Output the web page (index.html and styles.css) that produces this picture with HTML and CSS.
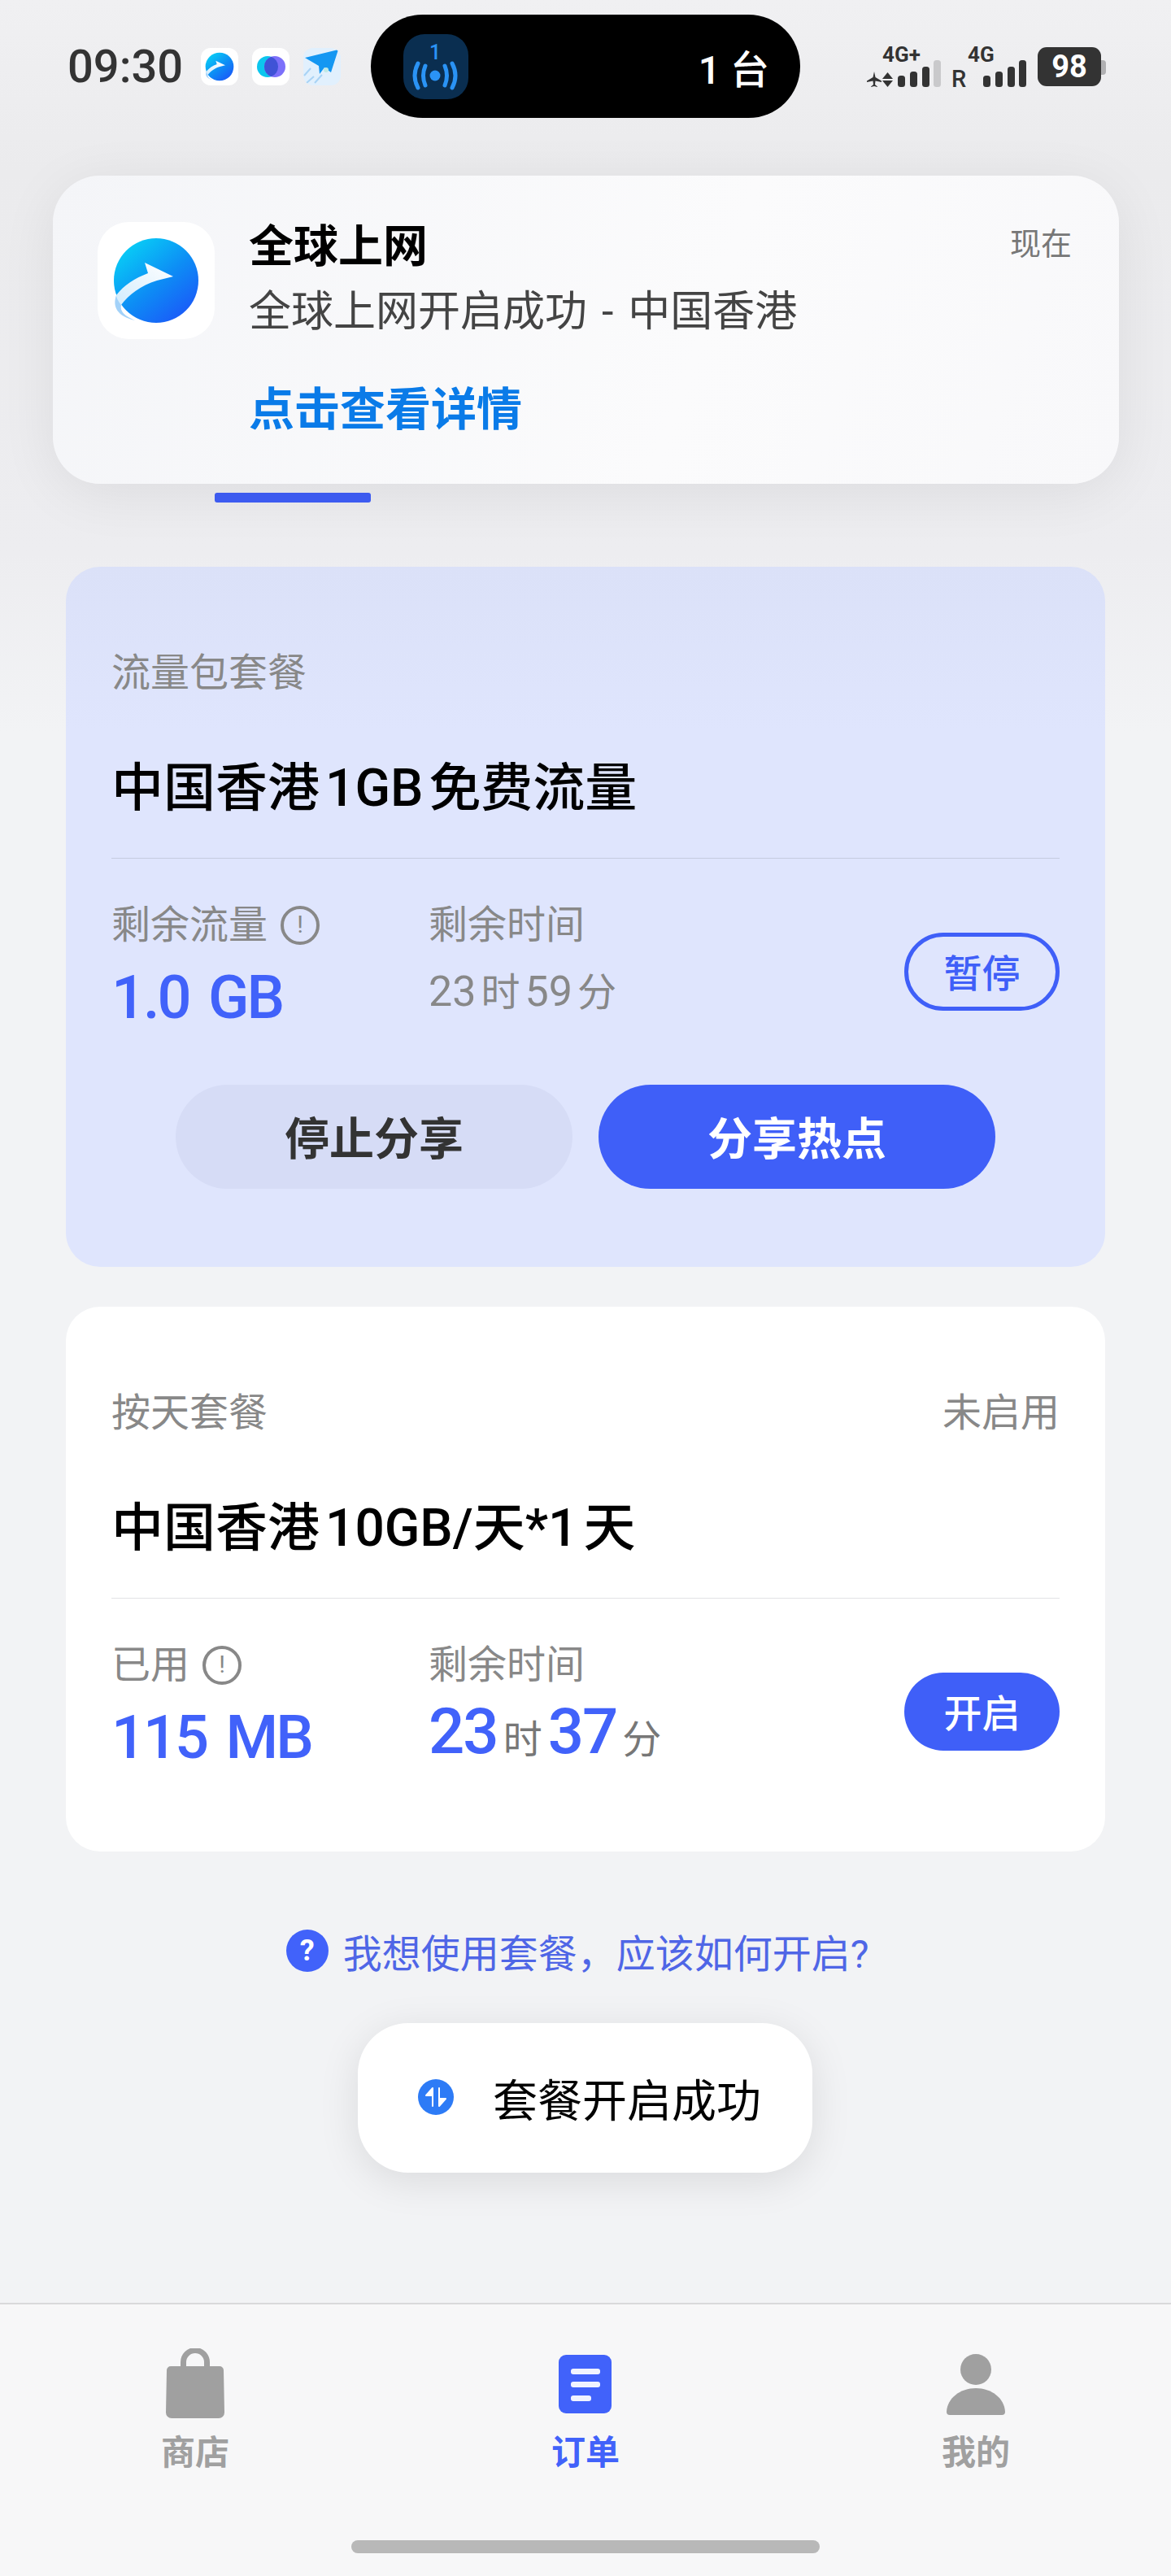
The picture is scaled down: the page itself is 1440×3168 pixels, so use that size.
FILE: index.html
```html
<!DOCTYPE html>
<html lang="zh-CN">
<head>
    <meta charset="UTF-8">
    <meta name="viewport" content="width=device-width, initial-scale=1.0">
    <link rel="stylesheet" href="styles.css">
    <title>全球上网</title>
</head>
<body>
    <svg class="defs" width="0" height="0" aria-hidden="true">
        <defs>
            <linearGradient id="ball" x1="0.15" y1="0.05" x2="0.85" y2="0.9">
                <stop offset="0" stop-color="#08d0f6"/>
                <stop offset="0.55" stop-color="#0d8df5"/>
                <stop offset="1" stop-color="#1a5cf8"/>
            </linearGradient>
            <linearGradient id="swoosh" x1="0" y1="1" x2="1" y2="0">
                <stop offset="0" stop-color="#d2ecfd"/>
                <stop offset="1" stop-color="#ffffff"/>
            </linearGradient>
            <symbol id="logo" viewBox="-2 -2 108 108">
                <circle cx="52" cy="52" r="52" fill="url(#ball)"/>
                <path d="M3 70 C-2 84 4 96 26 101 C14 96 7 90 9 82 Z" fill="#a3d2f9"/>
                <path d="M38 30 L73 47 L53 52 C33 58 18 70 9 82 C5 77 3 73 3 70 C12 58 26 49 42 43 Z" fill="url(#swoosh)"/>
            </symbol>
        </defs>
    </svg>

    <!-- status bar -->
    <div class="statusbar">
        <span class="clock">09:30</span>
        <div class="mini-apps">
            <div class="mini-app"><svg width="36" height="36"><use href="#logo"/></svg></div>
            <div class="mini-app">
                <svg width="46" height="46" viewBox="0 0 46 46">
                    <circle cx="19" cy="23" r="13" fill="#0cc6ee"/>
                    <circle cx="28" cy="23" r="13" fill="#7c70fa"/>
                    <path d="M23.5 10.8 A13 13 0 0 1 23.5 35.2 A13 13 0 0 1 23.5 10.8 Z" fill="#3f53d6"/>
                </svg>
            </div>
            <div class="mini-app mini-plane">
                <svg width="46" height="46" viewBox="0 0 46 46">
                    <path d="M1 34 L9 25 M4 43 L13 35 M14 43 L23 33" stroke="#a9d3f5" stroke-width="2" fill="none"/>
                    <path d="M43 2 L2 12 L19 22 L20 32 L26 24 L34 30 Z" fill="#1497f2"/>
                    <circle cx="28" cy="27" r="3" fill="#bfe9e6"/>
                </svg>
            </div>
        </div>
        <div class="signal">
            <svg width="298" height="74" viewBox="0 -10 298 74">
                <text class="net" x="21" y="20">4G+</text>
                <path d="M11 32 L12.5 39 L20 43.5 V45 L12.5 43.5 L12 48 L15 50.5 V51 L11 50 L7 51 V50.5 L10 48 L9.5 43.5 L2 45 V43.5 L9.5 39 Z" fill="#333"/>
                <path d="M27.5 33 L34 41 H21 Z M27.5 51 L34 43 H21 Z" fill="#333"/>
                <rect x="40" y="37" width="9" height="14" rx="3.5" fill="#333"/>
                <rect x="55" y="32" width="9" height="19" rx="3.5" fill="#333"/>
                <rect x="70" y="26" width="9" height="25" rx="3.5" fill="#333"/>
                <rect x="84" y="18" width="9" height="33" rx="3.5" fill="#c9c9cb"/>
                <text class="net roam" x="106" y="51">R</text>
                <text class="net" x="126" y="20">4G</text>
                <rect x="145" y="37" width="9" height="14" rx="3.5" fill="#333"/>
                <rect x="160" y="32" width="9" height="19" rx="3.5" fill="#333"/>
                <rect x="175" y="26" width="9" height="25" rx="3.5" fill="#333"/>
                <rect x="189" y="18" width="9" height="33" rx="3.5" fill="#333"/>
                <path d="M290 18 H292 A4 4 0 0 1 296 22 V32 A4 4 0 0 1 292 36 H290 Z" fill="#b0b0b2"/>
                <rect x="212" y="2" width="78" height="48" rx="11" fill="#333"/>
                <text class="battery" x="251" y="39">98</text>
            </svg>
        </div>
    </div>

    <!-- island -->
    <div class="island">
        <div class="island-icon">
            <svg width="80" height="80" viewBox="0 0 80 80">
                <text class="island-num" x="39" y="31">1</text>
                <circle cx="39" cy="51" r="6.5" fill="#2a93f5"/>
                <path d="M18 36 Q10 51 18 66 M60 36 Q68 51 60 66 M27 39 Q22 51 27 63 M51 39 Q56 51 51 63" stroke="#2a93f5" stroke-width="5" stroke-linecap="round" fill="none"/>
            </svg>
        </div>
        <span class="island-text">1 台</span>
    </div>

    <!-- incoming notification -->
    <div class="notice">
        <div class="notice-icon"><svg width="108" height="108"><use href="#logo"/></svg></div>
        <div class="notice-body">
            <div class="notice-title">全球上网</div>
            <div class="notice-sub">全球上网开启成功 - 中国香港</div>
            <div class="notice-link">点击查看详情</div>
        </div>
        <div class="notice-time">现在</div>
    </div>

    <div class="tabs">
        <div class="tab-line"></div>
    </div>

    <main>
        <section class="card card-active">
            <div class="card-head">
                <span class="card-label">流量包套餐</span>
            </div>
            <h2 class="card-title">中国香港<span class="gap">1GB</span>免费流量</h2>
            <div class="card-stats">
                <div class="stat stat-first">
                    <div class="stat-label">剩余流量 <span class="info">!</span></div>
                    <div class="stat-value">1.0 GB</div>
                </div>
                <div class="stat">
                    <div class="stat-label">剩余时间</div>
                    <div class="stat-time muted"><b>23</b>时<b>59</b>分</div>
                </div>
                <button class="pill pill-outline" type="button">暂停</button>
            </div>
            <div class="card-actions">
                <button class="action action-light" type="button">停止分享</button>
                <button class="action action-blue" type="button">分享热点</button>
            </div>
        </section>

        <section class="card">
            <div class="card-head">
                <span class="card-label">按天套餐</span>
                <span class="card-label">未启用</span>
            </div>
            <h2 class="card-title">中国香港<span class="gap">10GB/天*1</span>天</h2>
            <div class="card-stats">
                <div class="stat stat-first">
                    <div class="stat-label">已用 <span class="info">!</span></div>
                    <div class="stat-value">115 MB</div>
                </div>
                <div class="stat">
                    <div class="stat-label">剩余时间</div>
                    <div class="stat-time"><b>23</b>时<b>37</b>分</div>
                </div>
                <button class="pill" type="button">开启</button>
            </div>
        </section>

        <div class="help">
            <span class="help-icon">?</span>
            <span>我想使用套餐，应该如何开启?</span>
        </div>
    </main>

    <!-- toast -->
    <div class="toast">
        <svg width="44" height="44" viewBox="0 0 44 44">
            <circle cx="22" cy="22" r="22" fill="#2d7bf6"/>
            <path d="M18 33 V11 L10 20 H18 Z M26 11 V33 L34 24 H26 Z" fill="#fff" stroke="#fff" stroke-width="2" stroke-linejoin="round"/>
        </svg>
        <span>套餐开启成功</span>
    </div>

    <nav class="bottom-nav">
        <div class="nav-items">
            <div class="nav-item">
                <svg width="90" height="90" viewBox="0 0 90 90">
                    <path d="M30.5 24 V17 a14.5 14.5 0 0 1 29 0 V24" stroke="#a0a0a0" stroke-width="7" fill="none"/>
                    <path d="M15 22 H75 A5 5 0 0 1 80 27 L81 79 A7 7 0 0 1 74 86 H16 A7 7 0 0 1 9 79 L10 27 A5 5 0 0 1 15 22 Z" fill="#a0a0a0"/>
                </svg>
                <span>商店</span>
            </div>
            <div class="nav-item nav-item-on">
                <svg width="90" height="90" viewBox="0 0 90 90">
                    <rect x="12" y="8" width="65" height="72" rx="9" fill="#4162fa"/>
                    <rect x="27" y="25" width="36" height="7" rx="3" fill="#f0f3ff"/>
                    <rect x="27" y="41" width="36" height="7" rx="3" fill="#f0f3ff"/>
                    <rect x="27" y="58" width="25" height="7" rx="3" fill="#f0f3ff"/>
                </svg>
                <span>订单</span>
            </div>
            <div class="nav-item">
                <svg width="90" height="90" viewBox="0 0 90 90">
                    <circle cx="45" cy="26" r="19" fill="#a0a0a0"/>
                    <path d="M13 82 A4 4 0 0 1 9 78 C10 61 26 49 45 49 C64 49 80 61 81 78 A4 4 0 0 1 77 82 Z" fill="#a0a0a0"/>
                </svg>
                <span>我的</span>
            </div>
        </div>
        <div class="home-bar"></div>
    </nav>
</body>
</html>
```

FILE: styles.css
```css
* {
    box-sizing: border-box;
}

body {
    font-family: Roboto, 'Noto Sans CJK SC', sans-serif;
    background: linear-gradient(#f0f0f2, #ebebed 210px, #ededf0 680px, #f2f3f5 900px);
    margin: 0;
    width: 1440px;
    height: 3168px;
    position: relative;
    display: flex;
    flex-direction: column;
    overflow: hidden;
}

.defs {
    position: absolute;
}

/* status bar */
.statusbar {
    height: 164px;
    padding: 0 78px 0 83px;
    display: flex;
    align-items: center;
}

.clock {
    font-size: 56px;
    font-weight: 500;
    color: #333;
}

.mini-apps {
    display: flex;
    gap: 17px;
    margin-left: 22px;
}

.mini-app {
    width: 46px;
    height: 46px;
    background-color: #fff;
    border-radius: 12px;
    display: flex;
    align-items: center;
    justify-content: center;
    overflow: hidden;
}

.mini-plane {
    background-color: #e1f0fd;
}

.signal {
    margin-left: auto;
    margin-top: 2px;
    height: 54px;
    display: flex;
    align-items: center;
}

.net {
    font-size: 26px;
    font-weight: 700;
    fill: #333;
}

.roam {
    font-size: 29px;
    font-weight: 500;
}

.battery {
    font-size: 38px;
    font-weight: 700;
    fill: #fff;
    text-anchor: middle;
}

.island {
    position: absolute;
    left: 456px;
    top: 18px;
    width: 528px;
    height: 127px;
    background-color: #000;
    border-radius: 64px;
    padding: 0 38px 0 40px;
    display: flex;
    align-items: center;
}

.island-icon {
    width: 80px;
    height: 80px;
    background-color: #0a2e50;
    border-radius: 26px;
}

.island-num {
    font-size: 25px;
    font-weight: 500;
    fill: #2a93f5;
    text-anchor: middle;
}

.island-text {
    margin-left: auto;
    color: #fff;
    font-size: 48px;
    font-weight: 500;
}

/* notification */
.notice {
    position: absolute;
    left: 65px;
    top: 216px;
    width: 1311px;
    height: 379px;
    padding: 57px 58px 0 55px;
    display: flex;
    align-items: flex-start;
    border-radius: 58px;
    background: linear-gradient(110deg, #f4f5f8, #fbfbfc 60%, #f8f8fa);
    box-shadow: 0 12px 70px rgba(0, 0, 0, 0.07);
}

.notice-icon {
    width: 144px;
    height: 144px;
    background-color: #fff;
    border-radius: 38px;
    display: flex;
    align-items: center;
    justify-content: center;
}

.notice-body {
    flex: 1;
    margin-left: 42px;
    margin-top: -2px;
}

.notice-title {
    font-size: 55px;
    font-weight: 700;
    line-height: 64px;
    color: #000;
}

.notice-sub {
    font-size: 52px;
    word-spacing: 5px;
    line-height: 64px;
    margin-top: 17px;
    color: #444;
}

.notice-link {
    font-size: 56px;
    font-weight: 700;
    line-height: 70px;
    margin-top: 53px;
    color: #0a7be8;
}

.notice-time {
    font-size: 38px;
    line-height: 50px;
    margin-top: 2px;
    color: #777;
}

.tabs {
    height: 454px;
    padding-left: 264px;
    display: flex;
    align-items: flex-end;
}

.tab-line {
    width: 192px;
    height: 12px;
    background-color: #3f5ef7;
    border-radius: 3px;
}

/* package cards */
main {
    margin: 79px 81px 0;
    display: flex;
    flex-direction: column;
    gap: 49px;
}

.card {
    background-color: #fff;
    border-radius: 42px;
    padding: 101px 56px 96px;
}

.card-active {
    background: linear-gradient(#dbe1f8, #dfe5fd 200px);
}

.card-head {
    display: flex;
    justify-content: space-between;
}

.card-label {
    font-size: 48px;
    line-height: 60px;
    color: #888;
}

.card-title {
    margin: 72px 0 0;
    padding-bottom: 45px;
    font-size: 64px;
    font-weight: 500;
    line-height: 80px;
    color: #000;
    border-bottom: 1px solid #e2e3e6;
}

.card-active .card-title {
    border-bottom-color: #c5cbe0;
}

.gap {
    margin: 0 7px;
}

.card-stats {
    display: flex;
    align-items: flex-start;
    margin-top: 52px;
}

.stat {
    flex: 1;
}

.stat-first {
    flex: none;
    width: 390px;
}

.stat-label {
    font-size: 48px;
    line-height: 60px;
    color: #888;
    display: flex;
    align-items: center;
    gap: 16px;
}

.info {
    flex: none;
    width: 48px;
    height: 48px;
    border: 4px solid #888;
    border-radius: 50%;
    font-size: 30px;
    line-height: 38px;
    text-align: center;
}

.stat-value {
    margin-top: 15px;
    font-size: 74px;
    font-weight: 500;
    letter-spacing: -3px;
    word-spacing: 8px;
    line-height: 88px;
    color: #4162fa;
}

.stat-time {
    margin-top: 8px;
    font-size: 48px;
    line-height: 88px;
    height: 88px;
    color: #777;
}

.stat-time b {
    margin-right: 7px;
    margin-left: 7px;
    font-size: 78px;
    font-weight: 500;
    letter-spacing: -2px;
    color: #4162fa;
}

.stat-time b:first-child {
    margin-left: 0;
}

.muted {
    color: #888;
}

.muted b {
    margin-right: 6px;
    margin-left: 6px;
    font-size: 52px;
    font-weight: 400;
    letter-spacing: 0;
    color: #888;
}

button {
    font-family: inherit;
    border: none;
    cursor: pointer;
}

.pill {
    width: 191px;
    height: 96px;
    margin-top: 39px;
    padding: 0 0 4px;
    border-radius: 48px;
    background-color: #3f5ff8;
    color: #fff;
    font-size: 47px;
    font-weight: 500;
}

.pill-outline {
    background-color: transparent;
    border: 5px solid #3f5ff8;
    color: #3f5ff8;
}

.card-actions {
    display: flex;
    justify-content: center;
    gap: 32px;
    margin-top: 63px;
}

.action {
    width: 488px;
    height: 128px;
    padding: 0 0 4px;
    border-radius: 64px;
    font-size: 55px;
    font-weight: 700;
}

.action-light {
    background-color: #d6dcf6;
    color: #333;
}

.action-blue {
    background-color: #3f5ff8;
    color: #fff;
}

/* help link */
.help {
    margin-top: 41px;
    padding-right: 20px;
    height: 64px;
    display: flex;
    align-items: center;
    justify-content: center;
    gap: 18px;
    font-size: 48px;
    color: #4f66e6;
}

.help-icon {
    width: 52px;
    height: 52px;
    border-radius: 50%;
    background-color: #4162fa;
    color: #fff;
    font-size: 36px;
    font-weight: 700;
    line-height: 52px;
    text-align: center;
}

.toast {
    position: absolute;
    left: 440px;
    top: 2488px;
    width: 559px;
    height: 184px;
    padding: 0 0 2px 74px;
    background-color: #fff;
    border-radius: 62px;
    box-shadow: 0 10px 50px rgba(0, 0, 0, 0.1);
    display: flex;
    align-items: center;
    gap: 48px;
    font-size: 55px;
    color: #000;
}

/* bottom nav */
.bottom-nav {
    margin-top: auto;
    height: 336px;
    padding-top: 54px;
    border-top: 2px solid #d9d9db;
    background-color: #f7f7f8;
    display: flex;
    flex-direction: column;
    align-items: center;
}

.nav-items {
    width: 100%;
    display: flex;
}

.nav-item {
    flex: 1;
    display: flex;
    flex-direction: column;
    align-items: center;
    font-size: 42px;
    font-weight: 700;
    line-height: 50px;
    color: #a0a0a0;
}

.nav-item span {
    margin-top: 14px;
}

.nav-item-on {
    color: #4162fa;
}

.home-bar {
    width: 576px;
    height: 16px;
    margin-top: 82px;
    background-color: #b8b8b8;
    border-radius: 8px;
}
```
